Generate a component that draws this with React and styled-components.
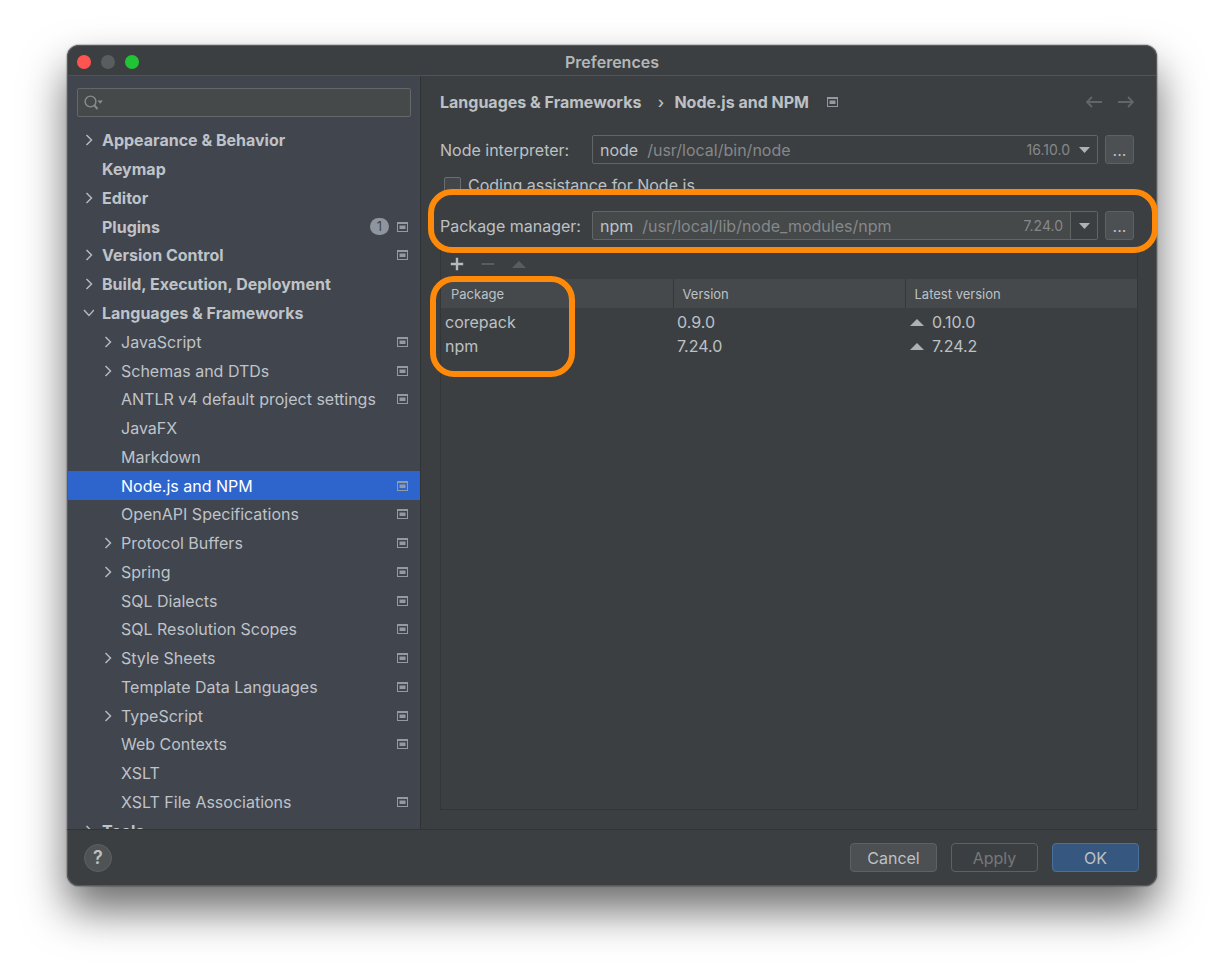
import React, { useState } from "react";
import styled, { createGlobalStyle } from "styled-components";

const GlobalStyle = createGlobalStyle`
  * {
    box-sizing: border-box;
  }

  body {
    margin: 0;
    background: #fff;
    color: #bdc1c5;
    font-family: Inter, "Liberation Sans", sans-serif;
    font-size: 16px;
    line-height: 24px;
  }

  button, input, select {
    font: inherit;
    color: inherit;
  }
`;

const Page = styled.main`
  display: flex;
  height: 100vh;
  min-height: 600px;
  padding: 45px 67px 88px;
  overflow: hidden;
`;

const Window = styled.div`
  display: flex;
  flex: 1;
  flex-direction: column;
  min-width: 0;
  border-radius: 12px;
  background: #3c3f41;
  box-shadow: inset 0 0 0 1px #585b5d, 0 0 1px 1px rgba(0, 0, 0, 0.2),
    0 24px 44px rgba(0, 0, 0, 0.58);
`;

const TitleBar = styled.header`
  display: grid;
  grid-template-columns: 1fr auto 1fr;
  align-items: center;
  height: 31px;
  padding: 4px 10px 0;
  border-bottom: 1px solid #515456;
`;

const Title = styled.h1`
  margin: 0;
  color: #b4b7b9;
  font-size: 16px;
  font-weight: 600;
`;

const Lights = styled.div`
  display: flex;
  gap: 10px;
`;

const Light = styled.button`
  width: 14px;
  height: 14px;
  padding: 0;
  border: none;
  border-radius: 50%;
  background: ${(props) => props.$color};
`;

const Body = styled.div`
  display: flex;
  flex: 1;
  min-height: 0;
`;

const Sidebar = styled.aside`
  display: flex;
  flex: none;
  flex-direction: column;
  width: 353px;
  margin-left: 1px;
  border-right: 1px solid #313436;
  background: #41454e;
  overflow: hidden;
`;

const SearchBox = styled.label`
  display: flex;
  align-items: center;
  flex: none;
  height: 29px;
  margin: 12px 9px 9px;
  padding-left: 6px;
  border: 1px solid #656869;
  border-radius: 2px;
  background: #45494a;
`;

const SearchInput = styled.input`
  flex: 1;
  min-width: 0;
  border: none;
  outline: none;
  background: transparent;
`;

/* the last row runs under the footer */
const Tree = styled.ul`
  display: flex;
  flex: 1;
  flex-direction: column;
  margin: 0 0 -16px;
  padding: 0;
  list-style: none;
`;

const TreeItem = styled.li`
  display: flex;
  flex: 1 0 auto;
`;

const TreeRow = styled.button`
  display: flex;
  align-items: center;
  flex: 1;
  padding: 0 12px 0 ${(props) => (props.$child ? 34 : 15)}px;
  border: none;
  background: ${(props) => (props.$selected ? "#2d65cd" : "transparent")};
  color: ${(props) => (props.$selected ? "#fff" : "#bfc3c8")};
  font-weight: ${(props) => (props.$child ? 400 : 700)};
  line-height: 24px;
  text-align: left;
`;

const ArrowSlot = styled.span`
  display: flex;
  flex: none;
  width: 19px;
`;

const TreeLabel = styled.span`
  flex: 1;
  white-space: nowrap;
`;

const Badge = styled.span`
  width: 19px;
  height: 17px;
  margin-right: 8px;
  border-radius: 9px;
  background: #8f959d;
  color: #41454e;
  font-size: 13px;
  font-weight: 400;
  line-height: 17px;
  text-align: center;
`;

const Content = styled.section`
  display: flex;
  flex: 1;
  flex-direction: column;
  min-width: 0;
  padding: 14px 19px 19px;
`;

const Breadcrumb = styled.div`
  display: flex;
  align-items: center;
  height: 24px;
  margin-bottom: 21px;
  padding-right: 4px;
  font-weight: 700;
`;

const CrumbArrow = styled.span`
  width: 33px;
  padding-left: 6px;
  font-weight: 500;
  text-align: center;
`;

const CrumbIcon = styled.span`
  display: flex;
  flex: 1;
  padding-left: 18px;
`;

const NavButton = styled.button`
  display: flex;
  margin-left: 16px;
  padding: 0;
  border: none;
  background: transparent;
`;

const Field = styled.div`
  position: relative;
  display: flex;
  align-items: center;
  padding-right: 4px;
`;

const FieldLabel = styled.label`
  flex: none;
  width: 152px;
  white-space: nowrap;
`;

const Combo = styled.div`
  position: relative;
  display: flex;
  align-items: center;
  flex: 1;
  height: 29px;
  min-width: 0;
  padding-left: 7px;
  border: 1px solid #626566;
  border-radius: 2px;
  background: ${(props) => (props.$editable ? "#45494a" : "transparent")};
`;

const Path = styled.span`
  flex: 1;
  margin-left: 9px;
  color: #85888a;
`;

const Version = styled.span`
  margin-right: ${(props) => (props.$editable ? 7 : 0)}px;
  color: #85888a;
  font-size: 14px;
`;

const ComboArrow = styled.span`
  display: flex;
  align-items: center;
  align-self: stretch;
  justify-content: center;
  width: 27px;
  border-left: 1px solid ${(props) => (props.$editable ? "#626566" : "transparent")};
  background: #3c3f41;
`;

const ComboSelect = styled.select`
  position: absolute;
  inset: 0;
  width: 100%;
  opacity: 0;
`;

const MoreButton = styled.button`
  width: 29px;
  height: 29px;
  margin-left: 7px;
  padding: 0;
  border: 1px solid #5e6162;
  border-radius: 3px;
  background: #4c5052;
`;

const CheckLabel = styled.label`
  display: flex;
  align-items: center;
  gap: 7px;
  margin: 9px 0 14px 4px;
`;

const CheckBox = styled.input`
  appearance: none;
  width: 17px;
  height: 17px;
  margin: 0;
  border: 1px solid #6b6e70;
  border-radius: 2px;
  background: #43474a;
`;

const Ring = styled.div`
  position: absolute;
  z-index: 1;
  border: 6px solid #ff8a0a;
  border-radius: 24px;
  pointer-events: none;
`;

const FieldRing = styled(Ring)`
  inset: -22px -20px -13px -12px;
`;

const TableRing = styled(Ring)`
  top: 25px;
  left: -11px;
  width: 145px;
  height: 101px;
`;

const Packages = styled.div`
  position: relative;
  flex: 1;
  margin-top: 10px;
  border: 1px solid #333638;
`;

const Toolbar = styled.div`
  display: flex;
  align-items: center;
  gap: 17px;
  height: 28px;
  padding: 0 0 2px 9px;
`;

const ToolButton = styled.button`
  display: flex;
  padding: 0;
  border: none;
  background: transparent;
`;

const Table = styled.table`
  width: 100%;
  border-collapse: collapse;
  table-layout: fixed;

  th {
    height: 29px;
    padding: 0 10px;
    background: #45494b;
    font-size: 13px;
    font-weight: 400;
    text-align: left;
  }

  th + th {
    padding-left: 9px;
    border-left: 1px solid #35383a;
  }

  td {
    height: 24px;
    padding: 0 4px;
  }

  tbody::before {
    content: "";
    display: block;
    height: 2px;
  }
`;

const Latest = styled.span`
  display: flex;
  align-items: center;
  gap: 8px;
  padding-left: 1px;
`;

const Footer = styled.footer`
  display: flex;
  align-items: center;
  gap: 14px;
  height: 57px;
  padding: 0 18px 1px 17px;
  border-top: 1px solid #323537;
`;

const HelpButton = styled.button`
  width: 28px;
  height: 28px;
  margin-right: auto;
  padding: 0;
  border: 1px solid #5e6162;
  border-radius: 50%;
  background: #4f5355;
  font-size: 18px;
  font-weight: 600;
  line-height: 24px;
`;

const DialogButton = styled.button`
  width: 87px;
  height: 29px;
  padding: 0;
  border: 1px solid ${(props) => (props.$primary ? "#4a7199" : "#5e6162")};
  border-radius: 4px;
  background: ${(props) => (props.$primary ? "#365880" : "#4c5052")};

  &:disabled {
    background: transparent;
    color: #75787a;
  }
`;

const Chevron = ({ open }) => (
  <svg width="11" height="12" viewBox="0 0 11 12" fill="none" stroke="#b4b8bc" strokeWidth="1.5">
    <path d={open ? "M1 3L6 8.5L11 3" : "M3.5 1L8.5 6L3.5 11"} />
  </svg>
);

const ProjectIcon = () => (
  <svg width="11" height="10" viewBox="0 0 11 10">
    <path fill="#949aa1" fillRule="evenodd" d="M0 0H11V10H0ZM1 2V9H10V2Z" />
    <path fill="#949aa1" d="M2.5 3.5H8.5V7H2.5Z" />
  </svg>
);

const SearchIcon = () => (
  <svg width="20" height="16" viewBox="0 0 20 16" fill="none" stroke="#8a8d8f">
    <circle cx="6.5" cy="6.5" r="5.4" strokeWidth="1.4" />
    <path d="M10.2 10.2L13.5 14" strokeWidth="2" />
    <path d="M13.5 5.5H19L16.2 8.7Z" fill="#8a8d8f" stroke="none" />
  </svg>
);

const Triangle = ({ down, color = "#afb1b3", width = 14, height = 7 }) => (
  <svg width={width} height={height} viewBox="0 0 14 7" preserveAspectRatio="none">
    <path fill={color} d={down ? "M0 0H14L7 7Z" : "M0 7H14L7 0Z"} />
  </svg>
);

const NavArrow = ({ forward }) => (
  <svg width="16" height="12" viewBox="0 0 16 12" fill="none" stroke="#636668" strokeWidth="1.8">
    <path d={forward ? "M0 6H15M10 1L15 6L10 11" : "M16 6H1M6 1L1 6L6 11"} />
  </svg>
);

const PlusMinus = ({ minus }) => (
  <svg width="14" height="14" viewBox="0 0 14 14">
    <path
      fill={minus ? "#5a5d5f" : "#b8babc"}
      d={
        minus
          ? "M0.5 6H13V8H0.5Z"
          : "M5.8 0.8H8.2V5.8H13.2V8.2H8.2V13.2H5.8V8.2H0.8V5.8H5.8Z"
      }
    />
  </svg>
);

const items = [
  { name: "Appearance & Behavior", arrow: true },
  { name: "Keymap" },
  { name: "Editor", arrow: true },
  { name: "Plugins", badge: 1, project: true },
  { name: "Version Control", arrow: true, project: true },
  { name: "Build, Execution, Deployment", arrow: true },
  { name: "Languages & Frameworks", arrow: true, open: true },
  { name: "JavaScript", child: true, arrow: true, project: true },
  { name: "Schemas and DTDs", child: true, arrow: true, project: true },
  { name: "ANTLR v4 default project settings", child: true, project: true },
  { name: "JavaFX", child: true },
  { name: "Markdown", child: true },
  { name: "Node.js and NPM", child: true, project: true },
  { name: "OpenAPI Specifications", child: true, project: true },
  { name: "Protocol Buffers", child: true, arrow: true, project: true },
  { name: "Spring", child: true, arrow: true, project: true },
  { name: "SQL Dialects", child: true, project: true },
  { name: "SQL Resolution Scopes", child: true, project: true },
  { name: "Style Sheets", child: true, arrow: true, project: true },
  { name: "Template Data Languages", child: true, project: true },
  { name: "TypeScript", child: true, arrow: true, project: true },
  { name: "Web Contexts", child: true, project: true },
  { name: "XSLT", child: true },
  { name: "XSLT File Associations", child: true, project: true },
  { name: "Tools", arrow: true },
];

const packages = [
  { name: "corepack", version: "0.9.0", latest: "0.10.0" },
  { name: "npm", version: "7.24.0", latest: "7.24.2" },
];

const ComboField = ({ id, label, name, path, version, editable, children }) => (
  <Field>
    <FieldLabel htmlFor={id}>{label}</FieldLabel>
    <Combo $editable={editable}>
      <span>{name}</span>
      <Path>{path}</Path>
      <Version $editable={editable}>{version}</Version>
      <ComboArrow $editable={editable}>
        <Triangle down width={11} height={6} />
      </ComboArrow>
      <ComboSelect id={id}>
        <option>{name}</option>
      </ComboSelect>
    </Combo>
    <MoreButton>...</MoreButton>
    {children}
  </Field>
);

const App = () => {
  const [selected, setSelected] = useState("Node.js and NPM");
  const [search, setSearch] = useState("");
  const [assistance, setAssistance] = useState(false);

  return (
    <Page>
      <GlobalStyle />
      <Window>
        <TitleBar>
          <Lights>
            <Light $color="#ff5450" aria-label="Close" />
            <Light $color="#595d5f" aria-label="Minimize" />
            <Light $color="#20c435" aria-label="Zoom" />
          </Lights>
          <Title>Preferences</Title>
        </TitleBar>

        <Body>
          <Sidebar>
            <SearchBox>
              <SearchIcon />
              <SearchInput
                aria-label="Search"
                value={search}
                onChange={(e) => setSearch(e.target.value)}
              />
            </SearchBox>
            <Tree>
              {items.map((item) => (
                <TreeItem key={item.name}>
                  <TreeRow
                    $child={item.child}
                    $selected={item.name === selected}
                    onClick={() => setSelected(item.name)}
                  >
                    <ArrowSlot>{item.arrow && <Chevron open={item.open} />}</ArrowSlot>
                    <TreeLabel>{item.name}</TreeLabel>
                    {item.badge && <Badge>{item.badge}</Badge>}
                    {item.project && <ProjectIcon />}
                  </TreeRow>
                </TreeItem>
              ))}
            </Tree>
          </Sidebar>

          <Content>
            <Breadcrumb>
              <span>Languages & Frameworks</span>
              <CrumbArrow>›</CrumbArrow>
              <span>Node.js and NPM</span>
              <CrumbIcon>
                <ProjectIcon />
              </CrumbIcon>
              <NavButton aria-label="Back">
                <NavArrow />
              </NavButton>
              <NavButton aria-label="Forward">
                <NavArrow forward />
              </NavButton>
            </Breadcrumb>

            <ComboField
              id="interpreter"
              label="Node interpreter:"
              name="node"
              path="/usr/local/bin/node"
              version="16.10.0"
            />
            <CheckLabel>
              <CheckBox
                type="checkbox"
                checked={assistance}
                onChange={(e) => setAssistance(e.target.checked)}
              />
              Coding assistance for Node.js
            </CheckLabel>
            <ComboField
              id="manager"
              label="Package manager:"
              name="npm"
              path="/usr/local/lib/node_modules/npm"
              version="7.24.0"
              editable
            >
              <FieldRing />
            </ComboField>

            <Packages>
              <Toolbar>
                <ToolButton aria-label="Add">
                  <PlusMinus />
                </ToolButton>
                <ToolButton aria-label="Remove">
                  <PlusMinus minus />
                </ToolButton>
                <ToolButton aria-label="Upgrade">
                  <Triangle color="#5a5d5f" />
                </ToolButton>
              </Toolbar>
              <Table>
                <thead>
                  <tr>
                    <th>Package</th>
                    <th>Version</th>
                    <th>Latest version</th>
                  </tr>
                </thead>
                <tbody>
                  {packages.map((item) => (
                    <tr key={item.name}>
                      <td>{item.name}</td>
                      <td>{item.version}</td>
                      <td>
                        <Latest>
                          <Triangle />
                          {item.latest}
                        </Latest>
                      </td>
                    </tr>
                  ))}
                </tbody>
              </Table>
              <TableRing />
            </Packages>
          </Content>
        </Body>

        <Footer>
          <HelpButton aria-label="Help">?</HelpButton>
          <DialogButton>Cancel</DialogButton>
          <DialogButton disabled>Apply</DialogButton>
          <DialogButton $primary>OK</DialogButton>
        </Footer>
      </Window>
    </Page>
  );
};

export default App;
